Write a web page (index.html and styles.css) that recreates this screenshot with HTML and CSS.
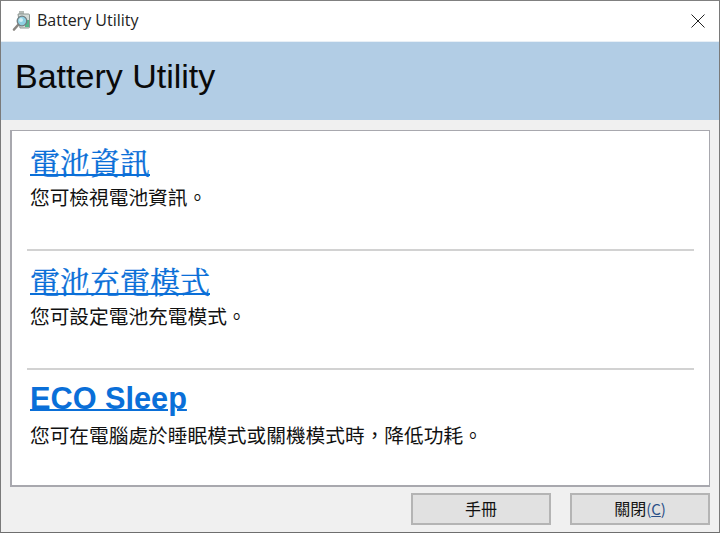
FILE: index.html
```html
<!DOCTYPE html>
<html lang="zh-Hant">
<head>
<meta charset="utf-8">
<title>Battery Utility</title>
<link rel="stylesheet" href="styles.css">
</head>
<body>
<div class="window">
  <div class="titlebar">
    <svg class="app-icon" width="20" height="22" viewBox="0 0 20 22">
      <rect x="7" y="1" width="5" height="3" fill="#b4bab6"/>
      <path d="M6 4h10.500a1 1 0 0 1 1 1v12a1 1 0 0 1-1 1H8z" fill="#d5dcd8" stroke="#8d9692"/>
      <rect x="13" y="10" width="4" height="7" fill="#52b48a"/>
      <path d="M6.500 14.500 2 19.500" stroke="#8a8681" stroke-width="2.600" stroke-linecap="round"/>
      <circle cx="10" cy="11" r="4.800" fill="#8fd0e2" stroke="#727d81" stroke-width="1.300"/>
      <circle cx="9" cy="10" r="2" fill="#d0eff5"/>
    </svg>
    <span class="window-title">Battery Utility</span>
    <svg class="close-icon" width="14" height="14" viewBox="0 0 14 14">
      <path d="M.5.500l13 13M13.500.500l-13 13" stroke="#222" stroke-width="1" fill="none"/>
    </svg>
  </div>
  <header class="banner">Battery Utility</header>
  <main class="panel">
    <section class="item">
      <a class="item-link" href="#">電池資訊</a>
      <p class="item-text">您可檢視電池資訊。</p>
    </section>
    <section class="item">
      <a class="item-link" href="#">電池充電模式</a>
      <p class="item-text">您可設定電池充電模式。</p>
    </section>
    <section class="item item-last">
      <a class="item-link item-link-latin" href="#">ECO Sleep</a>
      <p class="item-text">您可在電腦處於睡眠模式或關機模式時，降低功耗。</p>
    </section>
  </main>
  <footer class="actions">
    <button class="btn" type="button">手冊</button>
    <button class="btn" type="button">關閉<span class="accel">(<u>C</u>)</span></button>
  </footer>
</div>
</body>
</html>
```
FILE: styles.css
```css
* { box-sizing: border-box; }
html, body { margin: 0; height: 100%; }
body { width: 720px; height: 533px; overflow: hidden; background: #f0f0f0; }
.window {
  width: 720px;
  height: 533px;
  display: flex;
  flex-direction: column;
  border: 1px solid #7a7a7a;
  border-bottom-color: #6e6e6e;
  border-top-color: #808080;
  background: #f0f0f0;
  font-family: "Liberation Sans", "Noto Sans CJK TC", sans-serif;
}
.titlebar {
  height: 40px;
  flex: none;
  display: flex;
  align-items: center;
  padding-left: 11px;
  padding-right: 14px;
  background: #fff;
}
.app-icon { flex: none; margin-right: 5px; }
.window-title {
  font-family: "Open Sans", sans-serif;
  font-size: 16px;
  color: #222;
  flex: 1;
  padding-bottom: 2px;
}
.close-icon { flex: none; }
.banner {
  height: 79px;
  flex: none;
  background: #b2cde5;
  border-top: 1px solid #e8eff6;
  padding: 15px 0 0 14px;
  font-size: 34px;
  line-height: 38px;
  color: #0a0a0a;
}
.panel {
  margin: 10px 9px 0;
  height: 357px;
  flex: none;
  background: #fff;
  border: 2px solid #a8a8ae;
  border-top-width: 1px;
  border-right-width: 1px;
  padding: 1px 15px 0 15px;
}
.item {
  height: 119px;
  padding-top: 12px;
  border-bottom: 2px solid #d2d2d2;
}
.item-last { border-bottom: 0; }
.item-link {
  display: block;
  width: max-content;
  margin-left: 3px;
  font-family: "Noto Serif CJK TC", "Liberation Serif", "Noto Sans CJK TC", serif;
  font-size: 30px;
  line-height: 34px;
  color: #0a6fd8;
  text-decoration: underline;
  text-decoration-thickness: 2px;
  text-underline-offset: 0;
  -webkit-text-stroke: 0.3px #0a6fd8;
}
.item-link-latin {
  font-family: "Liberation Sans", sans-serif;
  font-size: 30.700px;
  font-weight: bold;
  -webkit-text-stroke: 0;
}
.item-text {
  margin: 8px 0 0 3px;
  font-size: 19.700px;
  line-height: 24px;
  color: #111;
}
.actions {
  flex: 1;
  display: flex;
  justify-content: flex-end;
  align-items: flex-start;
  gap: 19px;
  padding: 6px 9px 0 0;
}
.btn {
  width: 140px;
  height: 32px;
  padding: 0 0 2px;
  background: #e1e1e1;
  border: 2px solid #b4b4b4;
  font-family: "Noto Sans CJK TC", sans-serif;
  font-size: 16px;
  line-height: 20px;
  color: #111;
}
.accel { color: #2a4f88; font-size: 15px; }
```
